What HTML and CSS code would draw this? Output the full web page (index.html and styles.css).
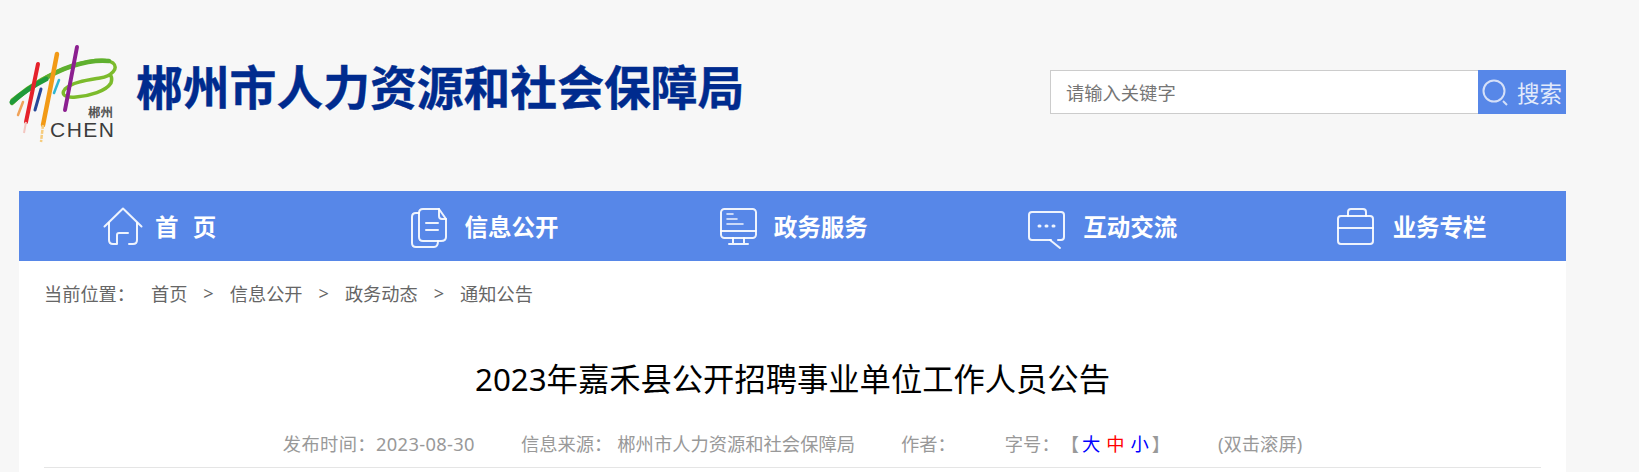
FILE: index.html
```html
<!DOCTYPE html>
<html lang="zh-CN">
<head>
    <meta charset="UTF-8">
    <title>2023年嘉禾县公开招聘事业单位工作人员公告</title>
    <link rel="stylesheet" href="styles.css">
</head>
<body>
    <div class="page">
        <div class="header">
            <svg class="logo" viewBox="0 0 130 110" width="130" height="110">
                <path d="M12 65C28 52 50 38 72 31C88 26 105 23 113 28C119 33 112 41 100 43C88 45 72 47 65 54C60 60 66 63 76 62C90 61 106 56 111 48C112 45 112 43 111 41" fill="none" stroke="#7cbb2c" stroke-width="3.500" stroke-linecap="round"/>
                <path d="M12 68C24 56 50 38 72 31C88 26 100 25 109 26" fill="none" stroke="#5fb02f" stroke-width="4.500" stroke-linecap="round"/>
                <path d="M12 67C22 58 34 50 46 44" fill="none" stroke="#1f9a3a" stroke-width="5" stroke-linecap="round"/>
                <path d="M38 29L26 87" stroke="#e5222b" stroke-width="4" stroke-linecap="round"/>
                <path d="M26 87L24 98" stroke="#f3c6c0" stroke-width="2"/>
                <path d="M57 19C53 40 47 70 43 90" stroke="#f29a16" stroke-width="4.500" stroke-linecap="round" fill="none"/>
                <path d="M43 90L41 107" stroke="#f6cc7e" stroke-width="2.500" stroke-dasharray="4 1"/>
                <path d="M77 12L65 75" stroke="#8c1f90" stroke-width="4" stroke-linecap="round"/>
                <path d="M41 54L35 75" stroke="#27479a" stroke-width="3" stroke-linecap="round"/>
                <path d="M59 45L54 58" stroke="#2fb6d2" stroke-width="2.500" stroke-linecap="round"/>
                <path d="M23 67L18 80" stroke="#f0a35a" stroke-width="2.500" stroke-linecap="round"/>
                <text class="logo-cn" x="88" y="82">郴州</text>
                <text class="logo-en" x="50" y="102">CHEN</text>
            </svg>
            <div class="site-name">郴州市人力资源和社会保障局</div>
            <div class="search">
                <input class="search-input" type="text" placeholder="请输入关键字">
                <div class="search-btn">
                    <svg viewBox="0 0 28 28" width="28" height="28" fill="none" stroke="#d5e0f8" stroke-width="2">
                        <circle cx="13" cy="13" r="10.500"/>
                        <path d="M22 23L26 27"/>
                    </svg>
                    <span>搜索</span>
                </div>
            </div>
        </div>

        <div class="nav">
            <div class="nav-item">
                <svg class="nav-icon" viewBox="0 0 40 40">
                    <path d="M1.500 20.500L20 2.500L38.500 20.500"/>
                    <path d="M6 17V34Q6 38 10 38H14V29Q14 27 16 27H25"/>
                    <path d="M34 17V34Q34 38 30 38H26"/>
                </svg>
                <span class="nav-home">首&nbsp;&nbsp;页</span>
            </div>
            <div class="nav-item">
                <svg class="nav-icon" viewBox="0 0 40 40">
                    <path d="M7 7V31Q7 35 11 35H29Q34 35 34 31V13L27 3H11Q7 3 7 7Z"/>
                    <path d="M27 3V10Q27 13 30 13H34"/>
                    <path d="M7 7H4Q0 7 0 11V37Q0 41 4 41H22Q26 41 26 35"/>
                    <path d="M14 17H26M14 24H26"/>
                </svg>
                <span>信息公开</span>
            </div>
            <div class="nav-item">
                <svg class="nav-icon" viewBox="0 0 40 40">
                    <rect x="-1" y="3" width="35" height="29" rx="3.500"/>
                    <path d="M-1 25H34M11 32V37M22 32V37M7 38H26"/>
                    <path d="M5 8H11M5 13H15M5 18H21" stroke-width="1.600"/>
                </svg>
                <span>政务服务</span>
            </div>
            <div class="nav-item">
                <svg class="nav-icon" viewBox="0 0 40 40">
                    <path d="M20 34H1Q-2 34 -2 31V9Q-2 6 1 6H30Q33 6 33 9V31Q33 34 30 34H27"/>
                    <path d="M19 34L29 42"/>
                    <path d="M8 20H9M15 20H16M22 20H23" stroke-width="3"/>
                </svg>
                <span>互动交流</span>
            </div>
            <div class="nav-item">
                <svg class="nav-icon" viewBox="0 0 40 40">
                    <path d="M7 10V6Q7 3 10 3H22Q25 3 25 6V10"/>
                    <rect x="-3" y="10" width="35" height="28" rx="3"/>
                    <path d="M-3 22H32"/>
                </svg>
                <span>业务专栏</span>
            </div>
        </div>

        <div class="content">
            <div class="crumbs">
                <span class="crumbs-label">当前位置：</span>
                <span>首页</span>
                <span class="crumbs-sep">&gt;</span>
                <span>信息公开</span>
                <span class="crumbs-sep">&gt;</span>
                <span>政务动态</span>
                <span class="crumbs-sep">&gt;</span>
                <span>通知公告</span>
            </div>
            <h1 class="title">2023年嘉禾县公开招聘事业单位工作人员公告</h1>
            <div class="meta">
                <span class="meta-time">发布时间：2023-08-30</span>
                <span class="meta-source">信息来源：</span>
                <span class="meta-org">郴州市人力资源和社会保障局</span>
                <span class="meta-author">作者：</span>
                <span class="meta-size">字号：</span>
                <span class="size-pick">【<b class="blue">大</b><b class="red">中</b><b class="blue">小</b>】</span>
                <span class="meta-scroll">(双击滚屏)</span>
            </div>
        </div>
    </div>
</body>
</html>
```

FILE: styles.css
```css
body {
    margin: 0;
    background-color: #f7f7f7;
    font-family: "Noto Sans", "Noto Sans CJK SC", sans-serif;
    color: #666;
    overflow: hidden;
}
.page {
    width: 1566px;
}
.header {
    display: flex;
    height: 191px;
    box-sizing: border-box;
    padding-top: 35px;
}
.logo {
    flex: none;
}
.logo-cn {
    font-size: 12.500px;
    font-weight: bold;
    fill: #555;
}
.logo-en {
    font-family: "Liberation Sans", sans-serif;
    font-size: 21px;
    letter-spacing: 1.500px;
    fill: #3c3c3c;
}
.site-name {
    margin: 24px 0 0 6px;
    font-size: 46.800px;
    line-height: 56px;
    font-weight: bold;
    color: #002b8e;
    -webkit-text-stroke: 0.4px #002b8e;
    white-space: nowrap;
}
.search {
    display: flex;
    height: 44px;
    width: 516px;
    margin: 35px 0 0 auto;
}
.search-input {
    flex: 1;
    min-width: 0;
    box-sizing: border-box;
    height: 44px;
    padding: 0 15px;
    border: 1px solid #ccc;
    border-right: none;
    background-color: #fff;
    font-family: inherit;
    font-size: 18.300px;
    outline: none;
}
.search-input::placeholder {
    color: #757575;
}
.search-btn {
    display: flex;
    align-items: center;
    gap: 8px;
    width: 88px;
    box-sizing: border-box;
    padding-left: 3px;
    background-color: #5787e8;
    color: #e3ebfb;
    font-size: 22.500px;
}
.nav {
    display: flex;
    height: 70px;
    margin-left: 19px;
    background-color: #5787e8;
}
.nav-item {
    display: flex;
    flex: 1;
    align-items: center;
    gap: 12px;
    padding-left: 84px;
    color: #fff;
    font-size: 23.500px;
    font-weight: bold;
    white-space: nowrap;
}
.nav-home {
    word-spacing: 1px;
}
.nav-icon {
    flex: none;
    width: 40px;
    height: 40px;
    overflow: visible;
    fill: none;
    stroke: #fff;
    stroke-width: 2;
    stroke-opacity: 0.9;
    stroke-linecap: round;
    stroke-linejoin: round;
}
.content {
    height: 211px;
    margin-left: 19px;
    padding: 0 25px;
    background-color: #fff;
}
.crumbs {
    display: flex;
    align-items: center;
    height: 64px;
    font-size: 18.200px;
}
.crumbs-label {
    margin-right: 16px;
}
.crumbs-sep {
    margin: 0 16px;
}
.title {
    margin: 30px 0 0;
    font-size: 31.300px;
    line-height: 48px;
    font-weight: normal;
    color: #000;
    text-align: center;
}
.meta {
    display: flex;
    justify-content: center;
    align-items: center;
    height: 48px;
    margin-top: 16px;
    border-bottom: 1px solid #e5e5e5;
    color: #999;
    font-size: 18.300px;
}
.meta-time {
    letter-spacing: 0.35px;
}
.meta-source {
    margin-left: 46px;
}
.meta-org {
    margin-left: 5px;
}
.meta-author {
    margin-left: 46px;
}
.meta-size {
    margin-left: 49px;
}
.size-pick {
    margin-left: 1px;
}
.size-pick b {
    margin: 0 3px;
    font-weight: normal;
}
.blue {
    color: #00f;
}
.red {
    color: #f00;
}
.meta-scroll {
    margin-left: 48px;
}
```
